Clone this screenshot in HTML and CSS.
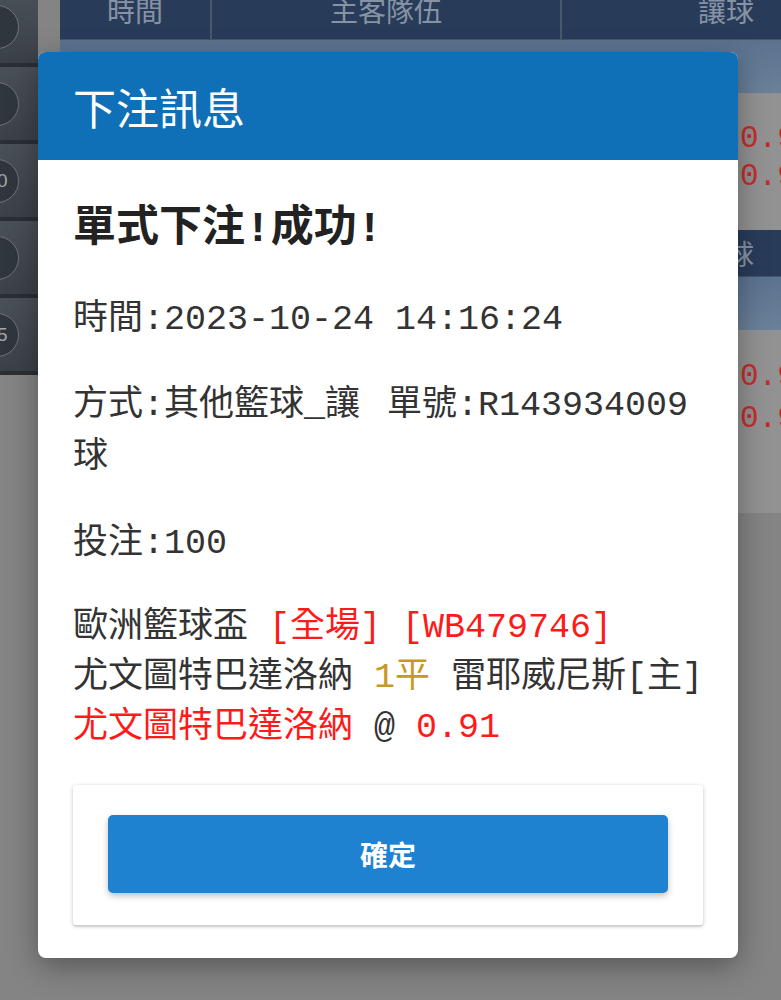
FILE: index.html
```html
<!DOCTYPE html>
<html lang="zh-Hant">
<head>
  <meta charset="UTF-8">
  <title>下注訊息</title>
  <link rel="stylesheet" href="styles.css">
</head>
<body>
  <div class="page">
    <aside class="side">
      <div class="side-item"><span class="chip"></span></div>
      <div class="side-item"><span class="chip"></span></div>
      <div class="side-item"><span class="chip">10</span></div>
      <div class="side-item"><span class="chip"></span></div>
      <div class="side-item"><span class="chip">15</span></div>
    </aside>

    <main class="board">
      <div class="row head">
        <div class="cell">時間</div>
        <div class="cell">主客隊伍</div>
        <div class="cell">讓球</div>
      </div>
      <div class="row league"></div>
      <div class="row game">
        <div class="cell"></div>
        <div class="cell"></div>
        <div class="cell odds"><span>0.91</span><span>0.91</span></div>
      </div>

      <div class="row head head2">
        <div class="cell">時間</div>
        <div class="cell">主客隊伍</div>
        <div class="cell">讓球</div>
      </div>
      <div class="row league"></div>
      <div class="row game game2">
        <div class="cell"></div>
        <div class="cell"></div>
        <div class="cell odds"><span>0.91</span><span>0.91</span></div>
      </div>
    </main>
  </div>

  <div class="dialog">
    <div class="dialog-title">下注訊息</div>
    <div class="dialog-body">
      <h3>單式下注!成功!</h3>
      <p>時間:2023-10-24 14:16:24</p>
      <p><span class="order">單號:R143934009</span>方式:其他籃球_讓球</p>
      <p>投注:100</p>
      <div class="detail">
        歐洲籃球盃 <span class="red">[全場]</span> <span class="red">[WB479746]</span><br>
        尤文圖特巴達洛納 <span class="gold">1平</span> 雷耶威尼斯[主]<br>
        <span class="red">尤文圖特巴達洛納</span> @ <span class="red">0.91</span>
      </div>
      <div class="actions">
        <button class="ok">確定</button>
      </div>
    </div>
  </div>
</body>
</html>
```

FILE: styles.css
```css
html {
  background-color: #848484;
}

body {
  margin: 0;
  padding: 0;
  height: 1000px;
  overflow: hidden;
  font-family: "Noto Sans CJK TC", sans-serif;
}

/* page behind the dialog, already dimmed */
.page {
  display: flex;
  gap: 22px;
}

.side {
  width: 38px;
  flex-shrink: 0;
  margin-top: -10px;
}

.side-item {
  height: 73px;
  border-bottom: 4px solid #2a2f35;
  background: linear-gradient(#4a5058, #3b4148);
  display: flex;
  align-items: center;
  overflow: hidden;
}

.chip {
  width: 42px;
  height: 42px;
  flex-shrink: 0;
  margin-left: -25px;
  border-radius: 50%;
  border: 1px solid #6f747a;
  background-color: #2f363d;
  color: #a3a7ab;
  font-family: "Liberation Sans", sans-serif;
  font-size: 19px;
  display: flex;
  align-items: center;
  justify-content: center;
}

.board {
  margin-top: -20px;
  flex-shrink: 0;
  width: 832px;
}

.row {
  display: grid;
  grid-template-columns: 152px 350px 330px;
}

.head {
  height: 60px;
  background-color: #283c5a;
  border-bottom: 1px solid #45566c;
  box-sizing: border-box;
  color: #8793a4;
  font-size: 28px;
}

.head .cell {
  display: flex;
  align-items: center;
  justify-content: center;
  border-right: 2px solid #4a596d;
}

.head2 {
  height: 47px;
}

.league {
  height: 53px;
  background: linear-gradient(#5b7390, #6a8199);
}

.game {
  height: 137px;
  background-color: #929292;
}

.game2 {
  height: 183px;
}

.odds {
  display: flex;
  flex-direction: column;
  padding: 27px 0 0 178px;
  line-height: 38px;
  color: #c62b2b;
  font-family: "Liberation Mono", monospace;
  font-size: 31px;
}

.game2 .odds {
  padding-top: 26px;
  line-height: 42px;
}

/* dialog */
.dialog {
  position: absolute;
  top: 52px;
  left: 38px;
  width: 700px;
  background-color: #fff;
  border-radius: 8px;
  overflow: hidden;
  box-shadow: 0 8px 30px rgba(0, 0, 0, 0.35);
}

.dialog-title {
  height: 108px;
  padding: 0 35px;
  display: flex;
  align-items: center;
  background-color: #0f70b8;
  color: #fff;
  font-size: 43px;
}

.dialog-body {
  padding: 38px 33px 33px 35px;
  color: #333;
  font-family: "Liberation Mono", "Noto Sans CJK TC", monospace;
  font-size: 35px;
}

.dialog-body h3 {
  margin: 0 0 33px;
  font-size: 43px;
  line-height: 63px;
  font-weight: bold;
  color: #222;
}

.dialog-body p {
  margin: 0 0 33px;
  line-height: 52.5px;
}

.order {
  float: right;
  margin-right: 17px;
}

.detail {
  line-height: 50px;
  margin-bottom: 32px;
}

.red {
  color: #ff1a1a;
}

.gold {
  color: #c9981f;
}

.actions {
  margin-right: 2px;
  background-color: #fff;
  border-radius: 3px;
  padding: 30px 35px 32px;
  box-shadow: 0 1px 4px rgba(0, 0, 0, 0.22), 0 2px 2px rgba(0, 0, 0, 0.08);
}

.ok {
  display: block;
  width: 100%;
  height: 78px;
  border: none;
  border-radius: 5px;
  background-color: #1e82d0;
  color: #fff;
  font-family: "Noto Sans CJK TC", sans-serif;
  font-size: 28px;
  font-weight: bold;
  box-shadow: 0 3px 6px rgba(0, 0, 0, 0.25);
  cursor: pointer;
}
```
